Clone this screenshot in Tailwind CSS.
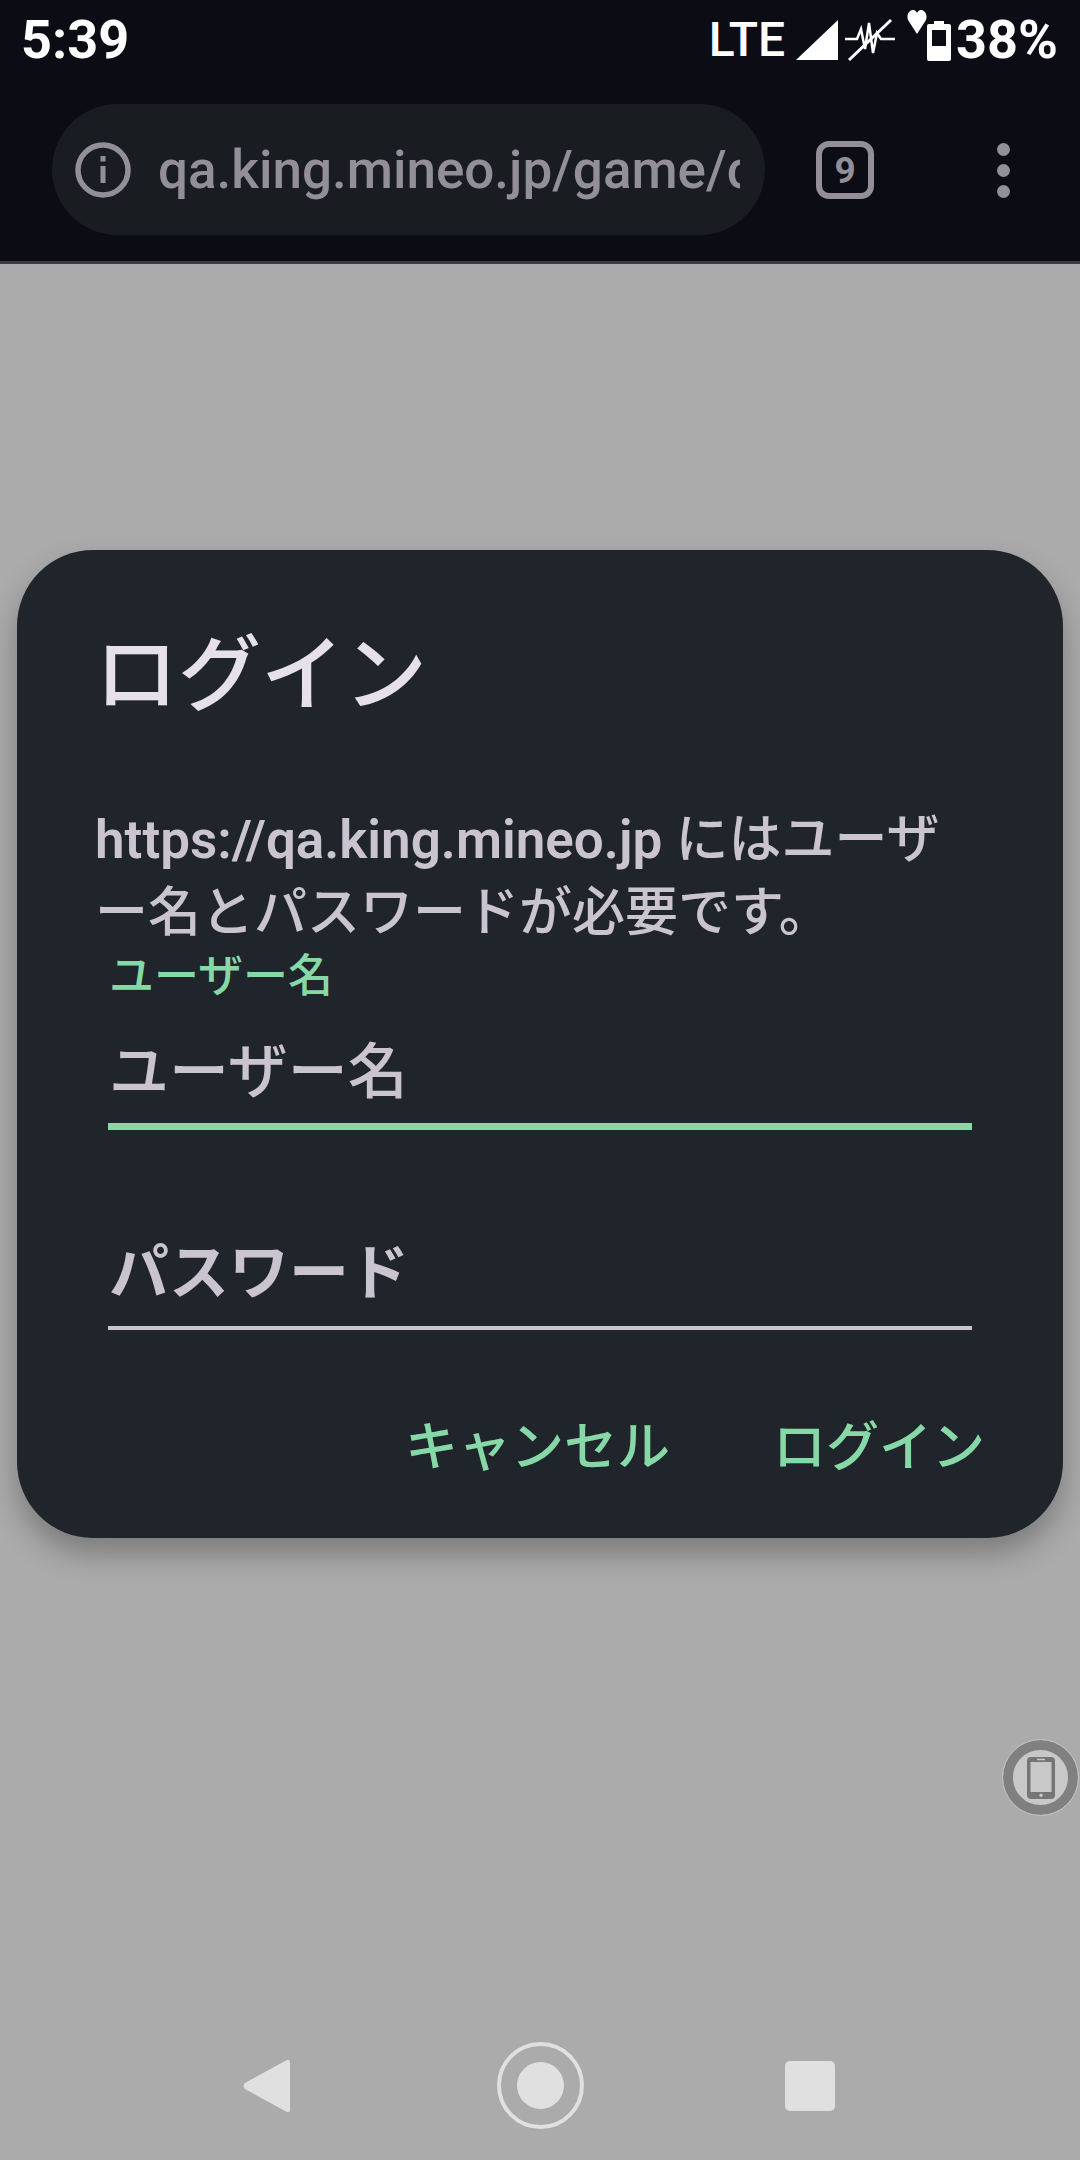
<!DOCTYPE html>
<html lang="ja">
<head>
    <meta charset="UTF-8">
    <meta name="viewport" content="width=device-width, initial-scale=1.0">
    <title>ログイン</title>
    <script src="https://cdn.jsdelivr.net/npm/@tailwindcss/browser@4"></script>
</head>
<body class="relative h-[2160px] w-[1080px] overflow-hidden bg-[#ababab] font-['Roboto','Noto_Sans_CJK_JP',sans-serif]">

    <!-- Status bar + browser toolbar -->
    <div class="h-[264px] border-b-[3px] border-[#3a3a40] bg-[#0c0c14]">
        <div class="flex h-[80px] items-center justify-between pl-[21px] pr-[22px] text-white">
            <span class="text-[54px] font-bold leading-none">5:39</span>
            <div class="flex items-center">
                <span class="text-[48px] font-medium leading-none">LTE</span>
                <svg class="ml-[11px]" width="42" height="42" viewBox="0 0 42 42"><path d="M42 1V41H0Z" fill="#fff"/></svg>
                <svg class="ml-[7px]" width="50" height="46" viewBox="0 0 50 46" fill="none" stroke="#fff" stroke-width="2.500"><path d="M0 22H12L16 12L20 32L24 6L28 36L32 16L36 22H50"/><path d="M4 43L46 3" stroke-width="3"/></svg>
                <div class="ml-[12px] flex items-start">
                    <svg class="-mt-[10px]" width="20" height="24" viewBox="0 0 20 24"><path d="M10 24L1 10C-1 4 3 0 6 0C8 0 9.500 1.500 10 3C10.500 1.500 12 0 14 0C17 0 21 4 19 10Z" fill="#fff"/></svg>
                    <svg class="mt-[1px]" width="24" height="40" viewBox="0 0 24 40"><path fill-rule="evenodd" d="M7 0H17V3H22Q24 3 24 5V38Q24 40 22 40H2Q0 40 0 38V5Q0 3 2 3H7ZM5 9V25H19V9Z" fill="#fff"/></svg>
                </div>
                <span class="ml-[5px] text-[54px] font-bold leading-none">38%</span>
            </div>
        </div>
        <div class="flex h-[181px] items-start pl-[52px] pt-[24px]">
            <div class="flex h-[131px] w-[713px] items-center overflow-hidden rounded-full bg-[#191c20] pl-[23px] pr-[25px]">
                <svg class="shrink-0" width="56" height="56" viewBox="0 0 56 56" fill="none"><circle cx="28" cy="28" r="25" stroke="#938f99" stroke-width="5.500"/><rect x="25.500" y="24" width="5" height="17" fill="#938f99"/><rect x="25.500" y="14" width="5" height="5.500" fill="#938f99"/></svg>
                <div class="ml-[27px] overflow-hidden whitespace-nowrap text-[53px] font-medium leading-[70px] text-[#938f99]">qa.king.mineo.jp/game/c</div>
            </div>
            <div class="ml-[51px] mt-[37px] flex h-[58px] w-[58px] items-center justify-center rounded-[13px] border-[6px] border-[#938f99] text-[37px] font-bold leading-none text-[#938f99]">9</div>
            <div class="ml-[123px] mt-[39px] flex w-[11px] flex-col gap-[8px]">
                <span class="h-[13px] w-[13px] rounded-full bg-[#938f99]"></span>
                <span class="h-[13px] w-[13px] rounded-full bg-[#938f99]"></span>
                <span class="h-[13px] w-[13px] rounded-full bg-[#938f99]"></span>
            </div>
        </div>
    </div>

    <!-- Login dialog -->
    <div class="ml-[17px] mt-[286px] h-[988px] w-[1046px] rounded-[76px] bg-[#20252c] shadow-[0_16px_30px_rgba(0,0,0,0.28)]">
        <h1 class="pl-[78px] pt-[79px] text-[83px] font-medium leading-[94px] text-[#e6e0e9]">ログイン</h1>
        <p class="ml-[78px] mt-[81px] w-[880px] text-[53px] font-medium leading-[73px] text-[#cac4d0]"><span class="font-semibold">https://qa.king.mineo.jp</span> にはユーザー名とパスワードが必要です。</p>
        <div class="ml-[91px] mt-[1px] w-[864px]">
            <div class="pl-[1px] text-[45px] font-medium leading-[52px] text-[#86d8a6]">ユーザー名</div>
            <div class="h-[127px] border-b-[7px] border-[#86d8a6] pl-[1px] pt-[38px] text-[60px] font-medium leading-[64px] text-[#cac4d0]">ユーザー名</div>
            <div class="mt-[109px] border-b-[4px] border-[#cac4d0] pb-[17px] pl-[1px] text-[60px] font-bold leading-[70px] text-[#cac4d0]">パスワード</div>
        </div>
        <div class="ml-[388px] mt-[86px] flex text-[53px] font-medium leading-[64px] text-[#86d8a6]">
            <button>キャンセル</button>
            <button class="ml-[103px]">ログイン</button>
        </div>
    </div>

    <!-- Floating device button -->
    <div class="absolute left-[1003px] top-[1740px] flex h-[75px] w-[75px] items-center justify-center rounded-full border-[10px] border-[#808080] bg-[#c8c8c8] outline-[1px] outline-[#c4c4c4]">
        <svg width="28" height="42" viewBox="0 0 28 42"><path fill-rule="evenodd" d="M4 0H24Q28 0 28 4V38Q28 42 24 42H4Q0 42 0 38V4Q0 0 4 0ZM3.500 5V35H24.500V5ZM10 1.800V3.200H18V1.800ZM14 36.500A1.500 1.500 0 1 0 14 40A1.500 1.500 0 1 0 14 36.500Z" fill="#757575"/></svg>
    </div>

    <!-- Navigation bar -->
    <div class="absolute bottom-[31px] left-0 flex w-full items-center pl-[243px]">
        <svg width="47" height="54" viewBox="0 0 47 54"><path d="M43 1.500Q47 -1 47 4V50Q47 55 43 52.500L2 30Q-1 27 2 24Z" fill="#e0e0e0"/></svg>
        <div class="ml-[207px] flex h-[87px] w-[87px] items-center justify-center rounded-full border-[4px] border-[#e0e0e0]">
            <span class="h-[47px] w-[47px] rounded-full bg-[#e0e0e0]"></span>
        </div>
        <span class="ml-[201px] h-[50px] w-[50px] rounded-[5px] bg-[#e0e0e0]"></span>
    </div>

</body>
</html>
